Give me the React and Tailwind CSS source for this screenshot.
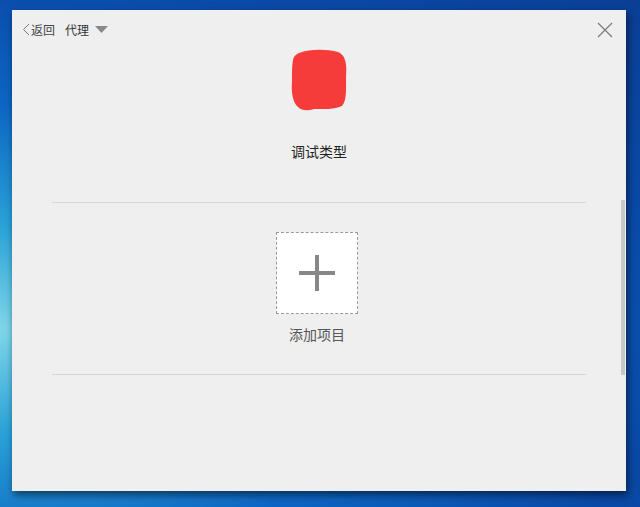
import React from 'react'

const font = { fontFamily: '"Noto Sans CJK SC", "Microsoft YaHei", sans-serif' }

function Blob() {
  return (
    <svg width="58" height="63" viewBox="0 0 58 63">
      <path
        d="M9 4 C20 0 36 0 48 3 C56 6 57 16 56 28 C56 40 57 51 52 57 C44 61 32 60 24 60 C18 62 12 62 8 58 C3 54 1 44 2 32 C2 22 2 12 4 8 C5 6 7 5 9 4 Z"
        fill="#f63b3b"
      />
    </svg>
  )
}

export default function App() {
  return (
    <div
      className="w-[640px] h-[507px] overflow-hidden pt-[10px] pl-[12px] bg-[radial-gradient(ellipse_at_0%_65%,#7fd6ea_0%,#2aa3d8_22%,#0d66c4_48%,#0a4aa8_75%,#0b3f96_100%)]"
      style={font}
    >
      <div className="relative w-[614px] h-[481px] bg-[#efefef] shadow-[2px_4px_8px_rgba(0,0,0,0.55)] flex flex-col">
        {/* header */}
        <div className="flex items-center h-[38px] pl-[10px] pr-[13px] pt-[1px]">
          <div className="flex items-center text-[12px] text-[#444]">
            <svg width="8" height="13" viewBox="0 0 8 13" className="mr-[1px]">
              <path d="M7 1 L1.5 6.5 L7 12" fill="none" stroke="#777" strokeWidth="1" />
            </svg>
            <span>返回</span>
          </div>
          <div className="flex items-center ml-[10px] text-[12px] text-[#333]">
            <span>代理</span>
            <svg width="13" height="8" viewBox="0 0 13 8" className="ml-[6px]">
              <path d="M0 0 L13 0 L6.5 7 Z" fill="#888" />
            </svg>
          </div>
          <svg width="16" height="16" viewBox="0 0 16 16" className="ml-auto">
            <path d="M1 1 L15 15 M15 1 L1 15" stroke="#7a7a7a" strokeWidth="1.2" />
          </svg>
        </div>

        {/* type */}
        <div className="flex flex-col items-center">
          <div className="mt-[1px] ml-[-1px]">
            <Blob />
          </div>
          <div className="mt-[30px] text-[14px] text-[#222] leading-[18px]">调试类型</div>
        </div>

        <div className="mx-[40px] mt-[42px] h-px bg-[#d6d6d6]" />

        {/* add */}
        <div className="flex flex-col items-center">
          <div className="mt-[29px] ml-[-4px] w-[82px] h-[82px] bg-white border border-dashed border-[#999] flex items-center justify-center">
            <svg width="38" height="38" viewBox="0 0 38 38">
              <path d="M19 1 V37 M1 19 H37" stroke="#878787" strokeWidth="4" />
            </svg>
          </div>
          <div className="mt-[11px] ml-[-4px] text-[14px] text-[#555] leading-[18px]">添加项目</div>
        </div>

        <div className="mx-[40px] mt-[31px] h-px bg-[#d6d6d6]" />

        {/* scrollbar */}
        <div className="absolute left-[609px] top-[190px] w-[4px] h-[175px] bg-[#c8c8c8]" />
      </div>
    </div>
  )
}
